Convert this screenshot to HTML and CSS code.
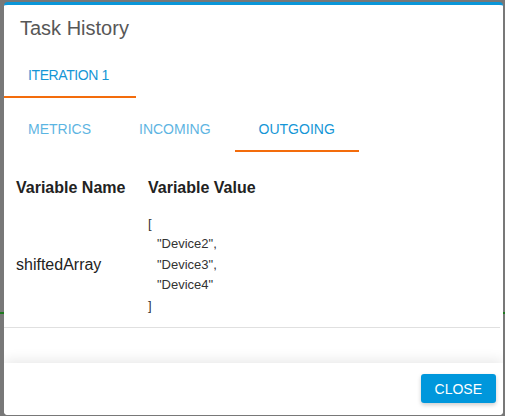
FILE: index.html
```html
<!DOCTYPE html>
<html lang="en">
<head>
    <meta charset="UTF-8">
    <meta name="viewport" content="width=device-width, initial-scale=1.0">
    <title>Task History</title>
    <link rel="stylesheet" href="styles.css">
</head>
<body>
    <div class="dialog">
        <h2 class="dialog-title">Task History</h2>

        <div class="tabs">
            <div class="tab tab-iteration active">ITERATION 1</div>
        </div>

        <div class="dialog-body">
            <div class="tabs sub-tabs">
                <div class="tab">METRICS</div>
                <div class="tab">INCOMING</div>
                <div class="tab active">OUTGOING</div>
            </div>

            <table class="var-table">
                <tr>
                    <th>Variable Name</th>
                    <th>Variable Value</th>
                </tr>
                <tr>
                    <td>shiftedArray</td>
                    <td class="value">
                        <div>[</div>
                        <div class="indent">"Device2",</div>
                        <div class="indent">"Device3",</div>
                        <div class="indent">"Device4"</div>
                        <div>]</div>
                    </td>
                </tr>
            </table>
        </div>

        <div class="dialog-actions">
            <button class="btn-close">CLOSE</button>
        </div>
    </div>
</body>
</html>
```

FILE: styles.css
```css
html, body {
    margin: 0;
    height: 100%;
}
body {
    font-family: "Liberation Sans", Arial, sans-serif;
    background: #787878;
    position: relative;
    overflow: hidden;
}
/* page line showing through the overlay */
body::before {
    content: "";
    position: absolute;
    left: 0;
    right: 0;
    top: 312px;
    height: 2px;
    background: #1f7a1f;
}
.dialog {
    position: relative;
    z-index: 1;
    box-sizing: border-box;
    height: 413px;
    margin: 2px 2px 0 4px;
    background: white;
    border-top: 3px solid #0a96d8;
    border-radius: 4px;
    display: flex;
    flex-direction: column;
    overflow: hidden;
}
.dialog-title {
    margin: 0;
    padding: 11px 16px 8px;
    font-size: 20px;
    line-height: 24px;
    font-weight: normal;
    color: #575757;
}
.tabs {
    display: flex;
}
.tab {
    padding: 19px 24px 13px;
    font-size: 13px;
    line-height: 16px;
    color: #1596d6;
    opacity: 0.7;
    border-bottom: 2px solid transparent;
}
.tab.active {
    opacity: 1;
    border-bottom-color: #f36c0c;
}
.tab-iteration {
    font-size: 14px;
    letter-spacing: -0.4px;
    padding-right: 27px;
}
.dialog-body {
    flex: 1;
    margin-right: 3px;
}
.sub-tabs {
    margin-top: 8px;
}
.sub-tabs .tab {
    font-size: 14px;
    padding-top: 15px;
}
.var-table {
    width: 100%;
    margin-top: 14px;
    border-collapse: collapse;
    color: #222;
}
.var-table th {
    text-align: left;
    font-size: 16px;
    line-height: 20px;
    padding: 12px 10px 8px 12px;
}
.var-table td {
    font-size: 16px;
    padding: 8px 10px 11px 12px;
    vertical-align: middle;
    border-bottom: 1px solid #e0e0e0;
}
.var-table th:first-child {
    width: 110px;
}
.var-table td.value {
    font-size: 13px;
    line-height: 20.4px;
    color: #333;
}
.indent {
    padding-left: 9px;
}
.dialog-actions {
    height: 52px;
    box-sizing: border-box;
    padding: 11px 7px 0 0;
    display: flex;
    justify-content: flex-end;
    align-items: flex-start;
    background: white;
    box-shadow: 0 -3px 12px rgba(0, 0, 0, 0.09);
}
.btn-close {
    height: 29px;
    padding: 0 14px;
    border: none;
    border-radius: 3px;
    background: #0097dc;
    color: white;
    font-family: inherit;
    font-size: 14px;
    box-shadow: 0 2px 4px rgba(0, 0, 0, 0.2);
    cursor: pointer;
}
```
